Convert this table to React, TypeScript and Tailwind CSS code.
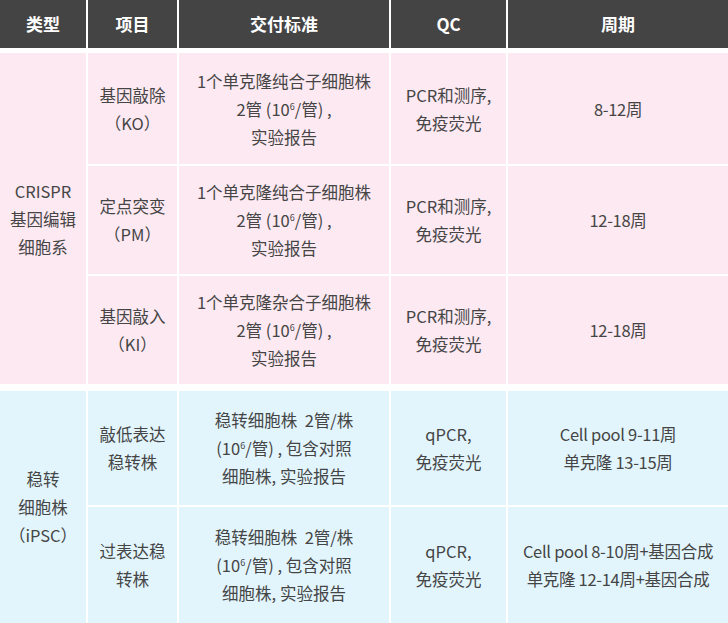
import React from 'react';

type Row = {
  item: React.ReactNode;
  spec: React.ReactNode;
  qc: React.ReactNode;
  period: React.ReactNode;
  h: string;
};

const Sup = () => <sup className="text-[9px] relative -top-[6px]">6</sup>;

const crisprRows: Row[] = [
  {
    item: <>基因敲除<br />（KO）</>,
    spec: <>1个单克隆纯合子细胞株<br />2管 (10<Sup />/管) ,<br />实验报告</>,
    qc: <>PCR和测序,<br />免疫荧光</>,
    period: <>8-12周</>,
    h: 'h-[111px]',
  },
  {
    item: <>定点突变<br />（PM）</>,
    spec: <>1个单克隆纯合子细胞株<br />2管 (10<Sup />/管) ,<br />实验报告</>,
    qc: <>PCR和测序,<br />免疫荧光</>,
    period: <>12-18周</>,
    h: 'h-[108px]',
  },
  {
    item: <>基因敲入<br />（KI）</>,
    spec: <>1个单克隆杂合子细胞株<br />2管 (10<Sup />/管) ,<br />实验报告</>,
    qc: <>PCR和测序,<br />免疫荧光</>,
    period: <>12-18周</>,
    h: 'h-[108px]',
  },
];

const ipscRows: Row[] = [
  {
    item: <>敲低表达<br />稳转株</>,
    spec: <>稳转细胞株&nbsp;&nbsp;2管/株<br />(10<Sup />/管) , 包含对照<br />细胞株, 实验报告</>,
    qc: <>qPCR,<br />免疫荧光</>,
    period: <>Cell pool 9-11周<br />单克隆 13-15周</>,
    h: 'h-[114px]',
  },
  {
    item: <>过表达稳<br />转株</>,
    spec: <>稳转细胞株&nbsp;&nbsp;2管/株<br />(10<Sup />/管) , 包含对照<br />细胞株, 实验报告</>,
    qc: <>qPCR,<br />免疫荧光</>,
    period: <>Cell pool 8-10周+基因合成<br />单克隆 12-14周+基因合成</>,
    h: 'h-[116px]',
  },
];

const cell = 'flex items-center justify-center text-center whitespace-nowrap';

function Section({ label, rows, bg }: { label: React.ReactNode; rows: Row[]; bg: string }) {
  return (
    <div className="flex gap-[2px]">
      <div className={`w-[86px] ${bg} ${cell}`}><div>{label}</div></div>
      <div className="flex flex-col gap-[2px]">
        {rows.map((r, i) => (
          <div key={i} className={`flex gap-[2px] ${r.h}`}>
            <div className={`w-[89px] ${bg} ${cell}`}><div>{r.item}</div></div>
            <div className={`w-[210px] ${bg} ${cell}`}><div>{r.spec}</div></div>
            <div className={`w-[115px] ${bg} ${cell}`}><div>{r.qc}</div></div>
            <div className={`w-[220px] ${bg} ${cell} tracking-[-0.3px]`}><div>{r.period}</div></div>
          </div>
        ))}
      </div>
    </div>
  );
}

export default function App() {
  const head = 'bg-[#444444] flex items-center justify-center text-white font-bold';
  return (
    <div
      className="w-[728px] h-[623px] overflow-hidden bg-white text-[#454545] text-[16.5px] leading-[28px]"
      style={{ fontFamily: '"Noto Sans CJK SC", "Noto Sans", sans-serif' }}
    >
      {/* Header */}
      <div className="flex gap-[2px] h-[48px] text-[17px]">
        <div className={`w-[86px] ${head}`}>类型</div>
        <div className={`w-[89px] ${head}`}>项目</div>
        <div className={`w-[210px] ${head}`}>交付标准</div>
        <div className={`w-[115px] ${head}`}>QC</div>
        <div className={`w-[220px] ${head}`}>周期</div>
      </div>

      <div className="mt-[5px]">
        <Section
          bg="bg-[#fde9f2]"
          rows={crisprRows}
          label={<>CRISPR<br />基因编辑<br />细胞系</>}
        />
      </div>

      <div className="mt-[7px]">
        <Section
          bg="bg-[#e2f5fd]"
          rows={ipscRows}
          label={<>稳转<br />细胞株<br />（iPSC）</>}
        />
      </div>
    </div>
  );
}
